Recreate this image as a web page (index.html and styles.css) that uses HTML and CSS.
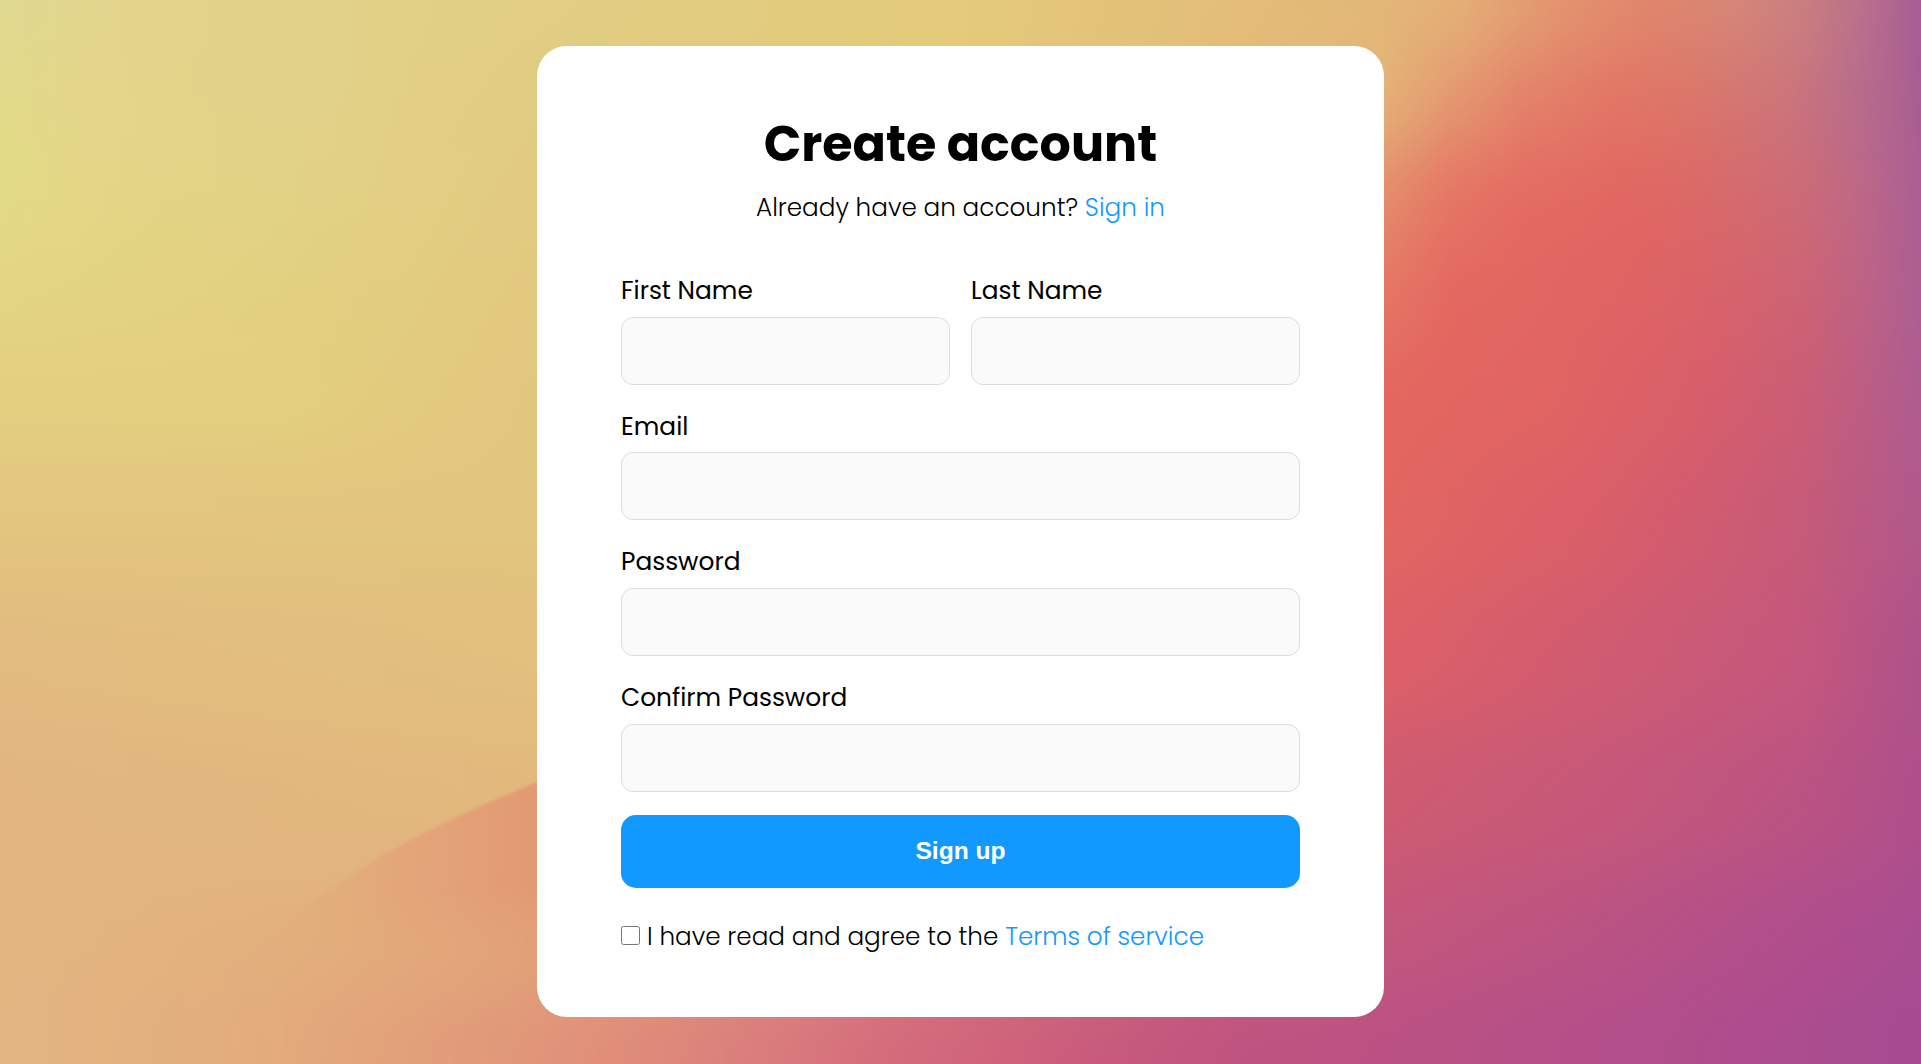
FILE: index.html
```html
<!DOCTYPE html>
<html lang="en">
<head>
<meta charset="utf-8">
<title>Create account</title>
<link rel="stylesheet" href="styles.css">
</head>
<body>
<svg class="backdrop" viewBox="0 0 1921 1064" preserveAspectRatio="none" aria-hidden="true">
  <defs>
    <filter id="blend" filterUnits="userSpaceOnUse" x="0" y="-200" width="1921" height="1464" color-interpolation-filters="sRGB"><feGaussianBlur stdDeviation="0 38"/></filter>
    <filter id="soft" filterUnits="userSpaceOnUse" x="0" y="700" width="1000" height="500" color-interpolation-filters="sRGB"><feGaussianBlur stdDeviation="1.5"/></filter>
    <linearGradient id="r0" gradientUnits="userSpaceOnUse" x2="1921"><stop offset="0" stop-color="#dfd990"/><stop offset=".07" stop-color="#e3d48c"/><stop offset=".28" stop-color="#e1ce84"/><stop offset=".5" stop-color="#e4ca7a"/><stop offset=".72" stop-color="#e2b778"/><stop offset=".76" stop-color="#e4b077"/><stop offset=".81" stop-color="#e3966f"/><stop offset=".86" stop-color="#e0866c"/><stop offset=".905" stop-color="#d58678"/><stop offset=".94" stop-color="#c97e80"/><stop offset=".97" stop-color="#b9708c"/><stop offset="1" stop-color="#a75c94"/></linearGradient>
    <linearGradient id="r1" gradientUnits="userSpaceOnUse" x2="1921"><stop offset="0" stop-color="#e1d988"/><stop offset=".05" stop-color="#e4d58a"/><stop offset=".15" stop-color="#e2d28a"/><stop offset=".28" stop-color="#e1cc80"/><stop offset=".5" stop-color="#e4c97a"/><stop offset=".72" stop-color="#e4b276"/><stop offset=".755" stop-color="#e49870"/><stop offset=".79" stop-color="#e3826a"/><stop offset=".84" stop-color="#e27465"/><stop offset=".88" stop-color="#db7569"/><stop offset=".93" stop-color="#cc747a"/><stop offset=".965" stop-color="#b96c8a"/><stop offset="1" stop-color="#a85e94"/></linearGradient>
    <linearGradient id="r2" gradientUnits="userSpaceOnUse" x2="1921"><stop offset="0" stop-color="#e2da84"/><stop offset=".05" stop-color="#e4d686"/><stop offset=".15" stop-color="#e2d284"/><stop offset=".28" stop-color="#e2ca80"/><stop offset=".6" stop-color="#e4b878"/><stop offset=".72" stop-color="#e48a6b"/><stop offset=".755" stop-color="#e57464"/><stop offset=".79" stop-color="#e46b62"/><stop offset=".86" stop-color="#e06662"/><stop offset=".91" stop-color="#d46a6e"/><stop offset=".94" stop-color="#cb6a78"/><stop offset=".97" stop-color="#bd6787"/><stop offset="1" stop-color="#aa5e92"/></linearGradient>
    <linearGradient id="r3" gradientUnits="userSpaceOnUse" x2="1921"><stop offset="0" stop-color="#e3d582"/><stop offset=".15" stop-color="#e2d080"/><stop offset=".28" stop-color="#e2c87e"/><stop offset=".7" stop-color="#e57c66"/><stop offset=".755" stop-color="#e46860"/><stop offset=".83" stop-color="#e06462"/><stop offset=".885" stop-color="#da6268"/><stop offset=".94" stop-color="#cc6274"/><stop offset=".97" stop-color="#be6285"/><stop offset="1" stop-color="#ac5f92"/></linearGradient>
    <linearGradient id="r4" gradientUnits="userSpaceOnUse" x2="1921"><stop offset="0" stop-color="#e3ce80"/><stop offset=".15" stop-color="#e3ce7e"/><stop offset=".28" stop-color="#e2c67e"/><stop offset=".72" stop-color="#e4665f"/><stop offset=".81" stop-color="#e06462"/><stop offset=".88" stop-color="#d85e6a"/><stop offset=".94" stop-color="#ca5d76"/><stop offset="1" stop-color="#ae5c90"/></linearGradient>
    <linearGradient id="r5" gradientUnits="userSpaceOnUse" x2="1921"><stop offset="0" stop-color="#e3c57f"/><stop offset=".28" stop-color="#e2c57e"/><stop offset=".72" stop-color="#e26660"/><stop offset=".83" stop-color="#d95e69"/><stop offset=".885" stop-color="#d05c70"/><stop offset=".94" stop-color="#c55a79"/><stop offset="1" stop-color="#b1588b"/></linearGradient>
    <linearGradient id="r6" gradientUnits="userSpaceOnUse" x2="1921"><stop offset="0" stop-color="#e2bb80"/><stop offset=".28" stop-color="#e2c07e"/><stop offset=".72" stop-color="#dd6067"/><stop offset=".83" stop-color="#d05c71"/><stop offset=".94" stop-color="#c4577d"/><stop offset="1" stop-color="#af528a"/></linearGradient>
    <linearGradient id="r7" gradientUnits="userSpaceOnUse" x2="1921"><stop offset="0" stop-color="#e2b580"/><stop offset=".28" stop-color="#e2b97d"/><stop offset=".72" stop-color="#ce5c70"/><stop offset=".83" stop-color="#c65879"/><stop offset=".94" stop-color="#bb5382"/><stop offset="1" stop-color="#ae4f8b"/></linearGradient>
    <linearGradient id="r8" gradientUnits="userSpaceOnUse" x2="1921"><stop offset="0" stop-color="#e2b580"/><stop offset=".28" stop-color="#e2af7c"/><stop offset=".72" stop-color="#c4577b"/><stop offset=".83" stop-color="#bb5382"/><stop offset=".94" stop-color="#b04e8c"/><stop offset="1" stop-color="#aa4d90"/></linearGradient>
    <linearGradient id="r9" gradientUnits="userSpaceOnUse" x2="1921"><stop offset="0" stop-color="#e2b582"/><stop offset=".08" stop-color="#e2b07e"/><stop offset=".14" stop-color="#e4ab7c"/><stop offset=".2" stop-color="#e3a27b"/><stop offset=".25" stop-color="#e19a7b"/><stop offset=".31" stop-color="#e18f7a"/><stop offset=".36" stop-color="#dd857b"/><stop offset=".41" stop-color="#d9797d"/><stop offset=".46" stop-color="#d46c7c"/><stop offset=".53" stop-color="#ce617b"/><stop offset=".6" stop-color="#c4577d"/><stop offset=".65" stop-color="#bf5380"/><stop offset=".72" stop-color="#bb5283"/><stop offset=".85" stop-color="#b24e8b"/><stop offset="1" stop-color="#a64b92"/></linearGradient>
    <linearGradient id="hill-fill" gradientUnits="userSpaceOnUse" x1="220" y1="1000" x2="760" y2="1000"><stop offset="0" stop-color="#e4a878" stop-opacity="0"/><stop offset=".12" stop-color="#e4a878" stop-opacity=".18"/><stop offset=".35" stop-color="#e3a278" stop-opacity=".85"/><stop offset=".58" stop-color="#e29974"/><stop offset="1" stop-color="#e08a78" stop-opacity="0"/></linearGradient>
    <linearGradient id="fade-y" x2="0" y2="1"><stop offset=".5" stop-color="#fff"/><stop offset=".85" stop-color="#fff" stop-opacity=".1"/></linearGradient>
    <mask id="hill-mask" maskUnits="userSpaceOnUse" x="0" y="700" width="1000" height="400"><rect y="700" width="1000" height="380" fill="url(#fade-y)"/></mask>
  </defs>
  <g filter="url(#blend)">
    <rect y="-200" width="1921" height="255" fill="url(#r0)"/>
    <rect y="55" width="1921" height="95" fill="url(#r1)"/>
    <rect y="150" width="1921" height="100" fill="url(#r2)"/>
    <rect y="250" width="1921" height="100" fill="url(#r3)"/>
    <rect y="350" width="1921" height="115" fill="url(#r4)"/>
    <rect y="465" width="1921" height="125" fill="url(#r5)"/>
    <rect y="590" width="1921" height="135" fill="url(#r6)"/>
    <rect y="725" width="1921" height="140" fill="url(#r7)"/>
    <rect y="865" width="1921" height="115" fill="url(#r8)"/>
    <rect y="980" width="1921" height="284" fill="url(#r9)"/>
  </g>
  <g filter="url(#soft)" mask="url(#hill-mask)">
    <path d="M800 700Q660 733 537 782Q430 826 370 863Q285 920 225 970Q180 1010 145 1080H800Z" fill="url(#hill-fill)"/>
  </g>
</svg>

<main class="card">
  <h1 class="title">Create account</h1>
  <p class="subtitle">Already have an account? <a class="link" href="#">Sign in</a></p>
  <form class="form">
    <div class="row">
      <div class="field"><label class="label" for="first">First Name</label><input class="input" id="first" type="text"></div>
      <div class="field"><label class="label" for="last">Last Name</label><input class="input" id="last" type="text"></div>
    </div>
    <div class="field"><label class="label label-email" for="email">Email</label><input class="input" id="email" type="email"></div>
    <div class="field"><label class="label" for="password">Password</label><input class="input" id="password" type="password"></div>
    <div class="field"><label class="label" for="confirm">Confirm Password</label><input class="input" id="confirm" type="password"></div>
    <button class="submit" type="button">Sign up</button>
    <div class="terms"><input class="check" id="agree" type="checkbox"><label class="terms-text" for="agree">I have read and agree to the <a class="link" href="#">Terms of service</a></label></div>
  </form>
</main>
</body>
</html>
```
FILE: styles.css
```css
* { box-sizing: border-box; }

body {
  margin: 0;
  height: 1064px;
  padding-top: 46px;
  overflow: hidden;
  font-family: Poppins, Inter, "Open Sans", sans-serif;
  font-size: 24.7px;
  color: #000;
}

.backdrop {
  position: absolute;
  inset: 0;
  z-index: -1;
  width: 100%;
  height: 100%;
}

.card {
  width: 847px;
  height: 971px;
  margin: 0 auto;
  padding: 60px 84px 0;
  border-radius: 30px;
  background: #fff;
}

.title {
  margin: 0;
  font-size: 49.2px;
  font-weight: 700;
  line-height: 75px;
  text-align: center;
  white-space: nowrap;
}

.subtitle {
  margin: 8px 0 0;
  font-weight: 300;
  line-height: 38px;
  text-align: center;
  white-space: nowrap;
}

.link { color: #1199ff; text-decoration: none; }

.form { display: flex; flex-direction: column; padding-top: 45px; }
.row { display: grid; grid-template-columns: 1fr 1fr; gap: 21px; }
.field { display: flex; flex-direction: column; height: 136px; }
.row .field { height: 135px; }
.label { font-size: 24.85px; line-height: 38px; margin-bottom: 7px; white-space: nowrap; }
.label-email { padding-top: 1px; margin-bottom: 6px; }

.input {
  width: 100%;
  height: 68px;
  margin: 0;
  padding: 0 20px;
  border: 1px solid #ddd;
  border-radius: 12px;
  background: #fafafa;
  font: inherit;
}

.submit {
  height: 73px;
  margin: 0;
  padding: 0 0 2px;
  border: 0;
  border-radius: 15px;
  background: #1199ff;
  color: #fff;
  font: 700 24.6px "Liberation Sans", Arial, sans-serif;
}

.terms { display: flex; align-items: flex-start; height: 38px; margin-top: 29px; }
.check { width: 19px; height: 19px; margin: 9px 7px 0 0; }
.terms-text { font-weight: 300; line-height: 38px; padding-top: 1px; white-space: nowrap; }
```
